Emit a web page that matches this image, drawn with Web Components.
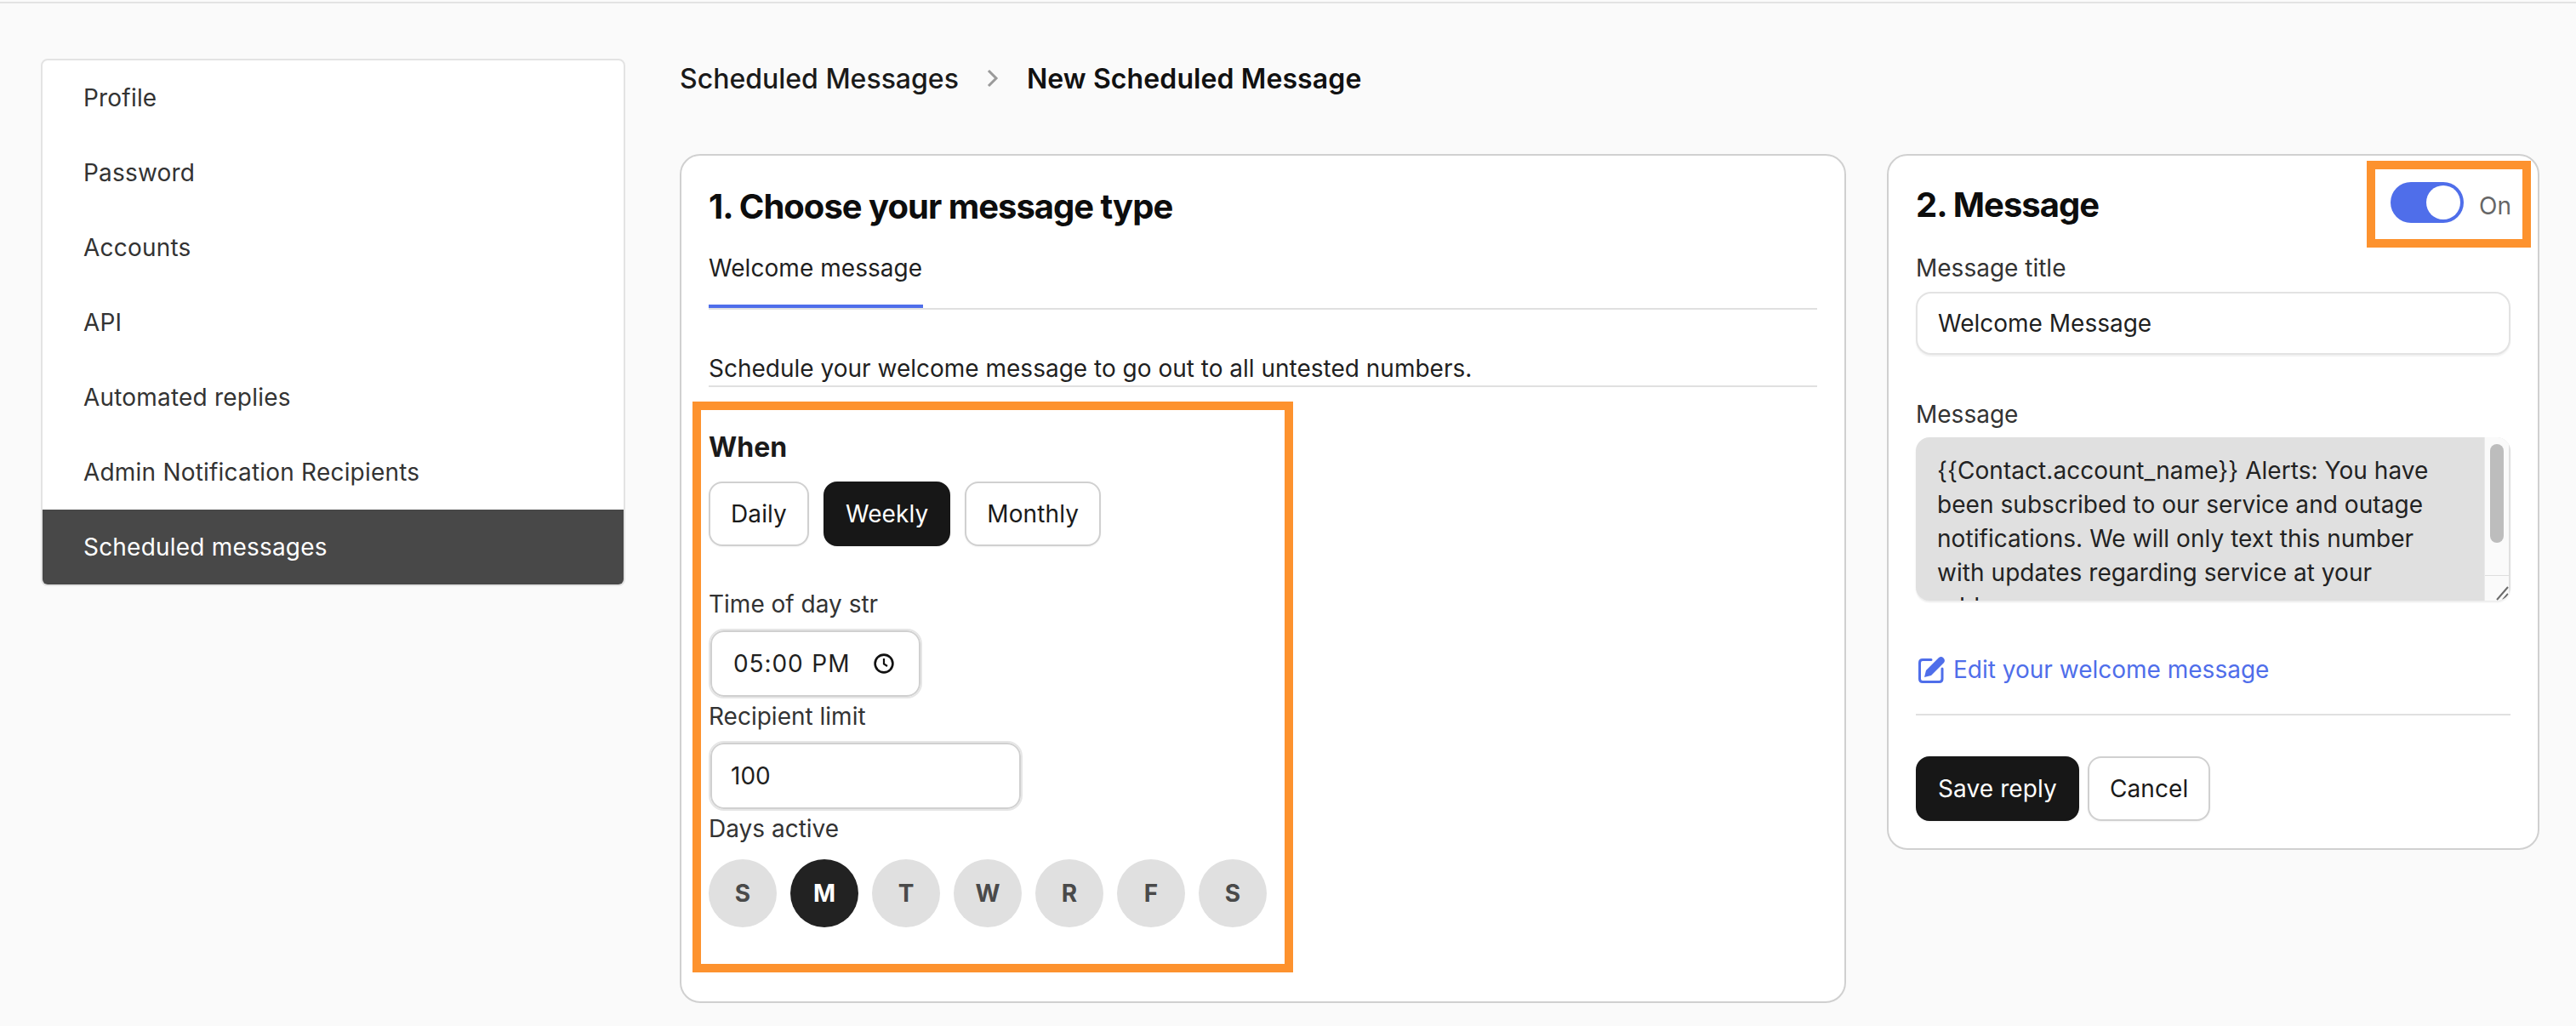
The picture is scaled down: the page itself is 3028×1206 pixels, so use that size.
<!DOCTYPE html>
<html lang="en">
<head>
<meta charset="utf-8">
<title>New Scheduled Message</title>
<style>
    html, body { margin: 0; padding: 0; background: #fafafa; }
    body { font-family: "Inter", "Liberation Sans", sans-serif; color: #1a1a1a; }
</style>
</head>
<body>
<app-shell>
    <settings-nav slot="nav">
        <nav-item>Profile</nav-item>
        <nav-item>Password</nav-item>
        <nav-item>Accounts</nav-item>
        <nav-item>API</nav-item>
        <nav-item>Automated replies</nav-item>
        <nav-item>Admin Notification Recipients</nav-item>
        <nav-item active>Scheduled messages</nav-item>
    </settings-nav>

    <bread-crumb slot="crumbs" parent="Scheduled Messages" current="New Scheduled Message"></bread-crumb>

    <type-card slot="left"></type-card>
    <message-card slot="right"></message-card>
</app-shell>

<script>
class AppShell extends HTMLElement {
    constructor() {
        super();
        this.attachShadow({ mode: 'open' });
        this.shadowRoot.innerHTML = `
            <style>
                :host { display: block; margin-top: 2px; border-top: 2px solid #e3e3e3; box-sizing: border-box; height: 1204px; overflow: hidden; }
                .page { display: flex; gap: 64px; padding: 65px 43px 0 48px; align-items: flex-start; }
                .side { flex: 0 0 687px; }
                .main { flex: 1; min-width: 0; margin-top: -1px; }
                .cards { display: grid; grid-template-columns: 1fr 767px; gap: 48px; align-items: start; margin-top: 65px; }
            </style>
            <div class="page">
                <div class="side"><slot name="nav"></slot></div>
                <div class="main">
                    <slot name="crumbs"></slot>
                    <div class="cards">
                        <slot name="left"></slot>
                        <slot name="right"></slot>
                    </div>
                </div>
            </div>
        `;
    }
}

class SettingsNav extends HTMLElement {
    constructor() {
        super();
        this.attachShadow({ mode: 'open' });
        this.shadowRoot.innerHTML = `
            <style>
                :host { display: block; background: #fff; border: 2px solid #e3e3e3; border-radius: 8px; overflow: hidden; }
            </style>
            <slot></slot>
        `;
    }
}

class NavItem extends HTMLElement {
    constructor() {
        super();
        this.attachShadow({ mode: 'open' });
        this.shadowRoot.innerHTML = `
            <style>
                :host { display: block; height: 88px; line-height: 88px; padding-left: 48px; font-size: 28px; letter-spacing: 0.2px; color: #333; }
                :host([active]) { background: #484848; color: #fff; }
            </style>
            <slot></slot>
        `;
    }
}

class BreadCrumb extends HTMLElement {
    constructor() {
        super();
        this.attachShadow({ mode: 'open' });
        this.shadowRoot.innerHTML = `
            <style>
                :host { display: flex; align-items: center; height: 48px; font-size: 32px; color: #1a1a1a; }
                .parent { font-weight: 500; }
                .current { font-weight: 600; color: #111; letter-spacing: 0.1px; }
                svg { margin: 0 32px; width: 16px; height: 22px; }
            </style>
            <span class="parent">${this.getAttribute('parent')}</span>
            <svg viewBox="0 0 16 22" fill="none" stroke="#9a9a9a" stroke-width="3"><path d="M3 2l9 9-9 9"/></svg>
            <span class="current">${this.getAttribute('current')}</span>
        `;
    }
}

class UiCard extends HTMLElement {
    constructor() {
        super();
        this.attachShadow({ mode: 'open' });
        this.shadowRoot.innerHTML = `
            <style>
                :host { display: block; background: #fff; border: 2px solid #d0d0d0; border-radius: 24px; padding: 32px; box-sizing: border-box; }
            </style>
            <slot></slot>
        `;
    }
}

class CardTitle extends HTMLElement {
    constructor() {
        super();
        this.attachShadow({ mode: 'open' });
        this.shadowRoot.innerHTML = `
            <style>
                :host { display: block; font-size: 40px; line-height: 56px; font-weight: 700; color: #0d0d0d; letter-spacing: -1px; white-space: nowrap; }
            </style>
            <slot></slot>
        `;
    }
}

class CalloutBox extends HTMLElement {
    constructor() {
        super();
        this.attachShadow({ mode: 'open' });
        this.shadowRoot.innerHTML = `
            <style>
                :host { display: block; border: 10px solid #fd922e; box-sizing: border-box; background: #fff; }
            </style>
            <slot></slot>
        `;
    }
}

class UiButton extends HTMLElement {
    constructor() {
        super();
        this.attachShadow({ mode: 'open' });
        this.shadowRoot.innerHTML = `
            <style>
                :host { display: inline-flex; align-items: center; justify-content: center; box-sizing: border-box; height: 76px; padding: 0 24px; background: #fff; color: #1a1a1a; border: 2px solid #d0d0d0; border-radius: 16px; font-size: 28px; font-weight: 400; letter-spacing: 0.1px; box-shadow: 0 1px 2px rgba(0,0,0,.05); }
                :host([primary]) { background: #171717; border-color: #171717; color: #fff; }
            </style>
            <slot></slot>
        `;
    }
}

class FieldLabel extends HTMLElement {
    constructor() {
        super();
        this.attachShadow({ mode: 'open' });
        this.shadowRoot.innerHTML = `
            <style>
                :host { display: block; font-size: 28px; line-height: 40px; color: #333; }
            </style>
            <slot></slot>
        `;
    }
}

class FieldBox extends HTMLElement {
    constructor() {
        super();
        this.attachShadow({ mode: 'open' });
        this.shadowRoot.innerHTML = `
            <style>
                :host { display: flex; align-items: center; box-sizing: border-box; height: 82px; background: #fff; border: 2px solid #e6e6e6; border-radius: 18px; box-shadow: inset 0 0 0 2px #d0d0d0; font-size: 28px; color: #1f1f1f; padding-left: 24px; }
                :host([plain]) { height: 74px; box-shadow: 0 2px 2px rgba(0,0,0,.06); border-color: #e3e3e3; padding-left: 24px; }
            </style>
            <slot></slot>
        `;
    }
}

class DayPicker extends HTMLElement {
    constructor() {
        super();
        this.attachShadow({ mode: 'open' });
        const active = this.getAttribute('active');
        const days = this.getAttribute('days').split('');
        this.shadowRoot.innerHTML = `
            <style>
                :host { display: flex; gap: 16px; }
                span { width: 80px; height: 80px; border-radius: 50%; background: #e0e0e0; color: #4a4a4a; display: flex; align-items: center; justify-content: center; font-size: 28px; font-weight: 700; }
                span.on { background: #222; color: #fff; }
            </style>
            ${days.map((d, i) => `<span class="${String(i) === active ? 'on' : ''}">${d}</span>`).join('')}
        `;
    }
}

class ToggleSwitch extends HTMLElement {
    constructor() {
        super();
        this.attachShadow({ mode: 'open' });
        this.shadowRoot.innerHTML = `
            <style>
                :host { display: flex; align-items: center; gap: 18px; }
                .track { width: 88px; height: 48px; box-sizing: border-box; padding: 4px; border-radius: 24px; background: #4f6eea; display: flex; justify-content: flex-end; }
                .knob { width: 40px; height: 40px; border-radius: 50%; background: #fff; }
                .label { font-size: 28px; line-height: 40px; color: #666; position: relative; top: 4px; }
            </style>
            <div class="track"><div class="knob"></div></div>
            <span class="label"><slot></slot></span>
        `;
    }
}

class MessageBox extends HTMLElement {
    constructor() {
        super();
        this.attachShadow({ mode: 'open' });
        this.shadowRoot.innerHTML = `
            <style>
                :host { display: flex; box-sizing: border-box; height: 192px; border-radius: 16px; overflow: hidden; background: #e0e0e0; box-shadow: 0 2px 2px rgba(0,0,0,.08); }
                .text { flex: 1; min-width: 0; height: 192px; overflow: hidden; box-sizing: border-box; padding: 19px 0 0 25px; font-size: 28px; line-height: 40px; letter-spacing: 0.05px; color: #222; }
                .text div { width: 590px; }
                .bar { flex: 0 0 28px; margin: 0 2px 0 0; background: #fafafa; border-left: 1px solid #e9e9e9; display: flex; flex-direction: column; }
                .track { flex: 1; padding: 8px 6px 0; box-sizing: border-box; }
                .thumb { height: 116px; border-radius: 8px; background: #bdbdbd; }
                .resizer { height: 30px; border-top: 1px solid #dedede; box-sizing: border-box; }
                .resizer svg { display: block; width: 28px; height: 29px; }
            </style>
            <div class="text"><div><slot></slot></div></div>
            <div class="bar">
                <div class="track"><div class="thumb"></div></div>
                <div class="resizer">
                    <svg viewBox="0 0 28 29" fill="none" stroke="#6b6b6b" stroke-width="2"><path d="M14 28L27 13M21 28l6-7"/></svg>
                </div>
            </div>
        `;
    }
}

class TypeCard extends HTMLElement {
    constructor() {
        super();
        this.attachShadow({ mode: 'open' });
        this.shadowRoot.innerHTML = `
            <style>
                :host { display: block; }
                ui-card { height: 998px; }
                .tabs { border-bottom: 2px solid #e0e0e0; }
                .tab { display: inline-block; padding: 24px 1px 23px 0; line-height: 40px; font-size: 28px; letter-spacing: 0.05px; color: #1f1f1f; border-bottom: 4px solid #4f6eea; vertical-align: top; }
                .desc { margin-top: 49px; font-size: 28px; line-height: 40px; color: #1f1f1f; border-bottom: 2px solid #e0e0e0; }
                callout-box { width: 706px; margin: 17px 0 0 -19px; padding: 22px 20px 43px 9px; }
                .when { font-size: 32px; line-height: 44px; font-weight: 700; color: #1a1a1a; }
                .freq { display: flex; gap: 17px; margin-top: 18px; }
                .time { margin-top: 48px; }
                .mt9 { margin-top: 9px; }
                .mt1 { margin-top: 1px; }
                .w-time { width: 251px; padding-left: 27px; }
                .w-num { width: 369px; }
                .time-text { letter-spacing: 0.9px; word-spacing: 1px; }
                .clock { width: 24px; height: 24px; margin-left: 28px; }
                day-picker { margin-top: 16px; }
            </style>
            <ui-card>
                <card-title>1. Choose your message type</card-title>
                <div class="tabs"><span class="tab">Welcome message</span></div>
                <div class="desc">Schedule your welcome message to go out to all untested numbers.</div>
                <callout-box>
                    <div class="when">When</div>
                    <div class="freq">
                        <ui-button>Daily</ui-button>
                        <ui-button primary>Weekly</ui-button>
                        <ui-button>Monthly</ui-button>
                    </div>
                    <field-label class="time">Time of day str</field-label>
                    <field-box class="w-time mt9">
                        <span class="time-text">05:00 PM</span>
                        <svg class="clock" viewBox="0 0 24 24" fill="none" stroke="#111" stroke-width="2.6"><circle cx="12" cy="12" r="10.4"/><path d="M12 6v6.5l4 2.5" stroke-width="2.2"/></svg>
                    </field-box>
                    <field-label class="mt1">Recipient limit</field-label>
                    <field-box class="w-num mt9">100</field-box>
                    <field-label class="mt1">Days active</field-label>
                    <day-picker days="SMTWRFS" active="1"></day-picker>
                </callout-box>
            </ui-card>
        `;
    }
}

class MessageCard extends HTMLElement {
    constructor() {
        super();
        this.attachShadow({ mode: 'open' });
        this.shadowRoot.innerHTML = `
            <style>
                :host { display: block; }
                .head { display: flex; align-items: center; justify-content: space-between; margin: -26px -24px 0 0; }
                .head card-title { padding-top: 2px; }
                callout-box { width: 193px; padding: 15px 13px 19px 18px; }
                .mt3 { margin-top: 4px; }
                .input { margin-top: 8px; }
                .msg { margin-top: 50px; }
                message-box { margin-top: 7px; }
                .edit { display: flex; align-items: center; gap: 9px; margin: 61px 0 0 3px; font-size: 28px; line-height: 40px; color: #4f6eea; }
                .edit svg { width: 32px; height: 32px; flex: none; }
                hr { border: 0; border-top: 2px solid #e0e0e0; margin: 32px 0 0; }
                .actions { display: flex; gap: 10px; margin-top: 48px; }
            </style>
            <ui-card>
                <div class="head">
                    <card-title>2. Message</card-title>
                    <callout-box><toggle-switch>On</toggle-switch></callout-box>
                </div>
                <field-label class="mt3">Message title</field-label>
                <field-box class="input" plain>Welcome Message</field-box>
                <field-label class="msg">Message</field-label>
                <message-box>{{Contact.account_name}} Alerts: You have been subscribed to our service and outage notifications. We will only text this number with updates regarding service at your address.</message-box>
                <div class="edit">
                    <svg viewBox="0 0 32 32" fill="none"><path d="M15 4.5H5Q1.5 4.5 1.5 8V27Q1.5 30.5 5 30.5H24.5Q28 30.5 28 27V15" stroke="#4f6eea" stroke-width="3" stroke-linecap="round"/><path d="M7 25L9 17 24 2Q27 0 29.5 2.5 32 5 30 8L15 23Z" fill="#4f6eea"/></svg>
                    <span>Edit your welcome message</span>
                </div>
                <hr>
                <div class="actions">
                    <ui-button primary>Save reply</ui-button>
                    <ui-button>Cancel</ui-button>
                </div>
            </ui-card>
        `;
    }
}

customElements.define('app-shell', AppShell);
customElements.define('settings-nav', SettingsNav);
customElements.define('nav-item', NavItem);
customElements.define('bread-crumb', BreadCrumb);
customElements.define('ui-card', UiCard);
customElements.define('card-title', CardTitle);
customElements.define('callout-box', CalloutBox);
customElements.define('ui-button', UiButton);
customElements.define('field-label', FieldLabel);
customElements.define('field-box', FieldBox);
customElements.define('day-picker', DayPicker);
customElements.define('toggle-switch', ToggleSwitch);
customElements.define('message-box', MessageBox);
customElements.define('type-card', TypeCard);
customElements.define('message-card', MessageCard);
</script>
</body>
</html>
